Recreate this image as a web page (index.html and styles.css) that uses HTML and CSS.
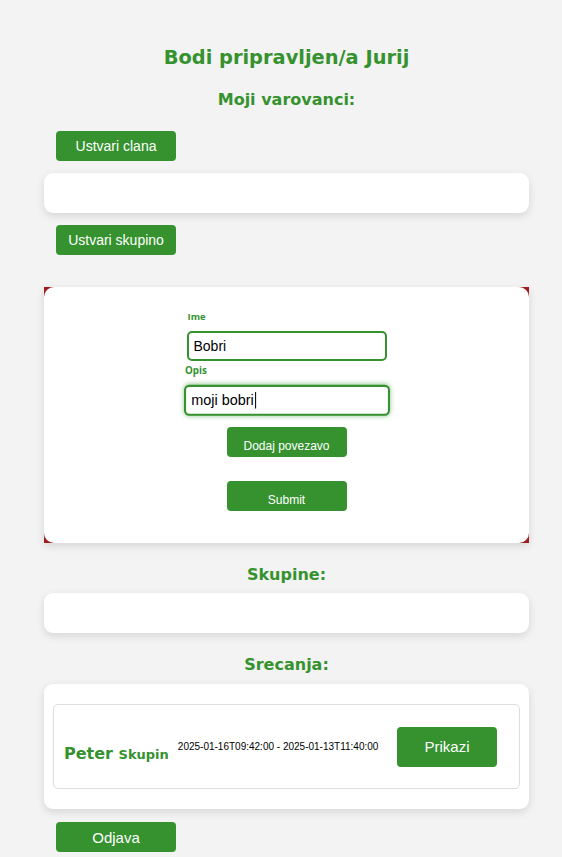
FILE: index.html
```html
<!DOCTYPE html>
<html lang="sl">
<head>
<meta charset="utf-8">
<title>Bodi pripravljen</title>
<link rel="stylesheet" href="styles.css">
</head>
<body>
<main class="page">
  <h1 class="title">Bodi pripravljen/a Jurij</h1>
  <h2 class="section-title sec-first">Moji varovanci:</h2>
  <div class="btn-row row-1"><button class="btn">Ustvari clana</button></div>
  <div class="card card-empty card-members"></div>
  <div class="btn-row row-2"><button class="btn">Ustvari skupino</button></div>

  <div class="form-card">
    <form class="form-inner">
      <div class="field">
        <label class="label">Ime</label>
        <input class="input" type="text" value="Bobri">
      </div>
      <div class="field field-focus">
        <label class="label">Opis</label>
        <div class="input input-focus">moji bobri<span class="caret"></span></div>
      </div>
      <button type="button" class="btn btn-small btn-link">Dodaj povezavo</button>
      <button type="button" class="btn btn-small btn-submit">Submit</button>
    </form>
  </div>

  <h2 class="section-title sec-groups">Skupine:</h2>
  <div class="card card-empty card-groups"></div>

  <h2 class="section-title sec-meet">Srecanja:</h2>
  <div class="card card-meet">
    <div class="meeting">
      <div class="meet-name"><span class="who">Peter</span> <span class="grp">Skupin</span></div>
      <div class="meet-date">2025-01-16T09:42:00 - 2025-01-13T11:40:00</div>
      <button class="btn btn-show">Prikazi</button>
    </div>
  </div>
  <div class="btn-row row-3"><button class="btn btn-logout">Odjava</button></div>
</main>
</body>
</html>
```
FILE: styles.css
```css
* { box-sizing: border-box; }
html, body { margin: 0; padding: 0; }
body {
  background: #f3f3f3;
  font-family: "Liberation Sans", Arial, sans-serif;
}
.page {
  width: 485px;
  margin-left: 44px;
  padding-top: 46px;
  padding-bottom: 20px;
  display: flex;
  flex-direction: column;
}
.title {
  margin: 0;
  font-family: "DejaVu Sans", Verdana, sans-serif;
  font-weight: bold;
  font-size: 19.4px;
  line-height: 24px;
  color: #35922f;
  text-align: center;
}
.section-title {
  margin: 0;
  font-family: "DejaVu Sans", Verdana, sans-serif;
  font-weight: bold;
  font-size: 16px;
  line-height: 20px;
  color: #35922f;
  text-align: center;
}
.sec-first { margin-top: 20px; }
.sec-groups { margin-top: 22px; }
.sec-meet { margin-top: 22px; }

.btn-row { display: flex; padding-left: 12px; }
.row-1 { margin-top: 21px; }
.row-2 { margin-top: 12px; }
.row-3 { margin-top: 13px; }

.btn {
  width: 120px;
  height: 30px;
  border: none;
  border-radius: 4px;
  background: #35922f;
  color: #ffffff;
  font-family: "Liberation Sans", Arial, sans-serif;
  font-size: 14px;
  padding: 0;
  cursor: pointer;
}
.btn-logout { font-size: 15px; }

.card {
  background: #ffffff;
  border-radius: 9px;
  box-shadow: 0 3px 8px rgba(0, 0, 0, 0.12);
}
.card-empty { height: 40px; }
.card-members { margin-top: 12px; }
.card-groups { margin-top: 8px; }

.form-card {
  margin-top: 32px;
  height: 256px;
  background: #a01d1f;
  box-shadow: 0 3px 8px rgba(0, 0, 0, 0.12);
  display: flex;
}
.form-inner {
  flex: 1;
  background: #ffffff;
  border-radius: 10px;
  padding-top: 24px;
  display: flex;
  flex-direction: column;
  align-items: center;
}
.field {
  width: 200px;
  display: flex;
  flex-direction: column;
}
.field-focus {
  margin-top: 4px;
  transform: scale(1.03);
}
.label {
  font-family: "Open Sans", sans-serif;
  font-weight: bold;
  font-size: 9.5px;
  line-height: 12px;
  color: #35922f;
  padding-left: 1px;
  margin-bottom: 8px;
}
.input {
  width: 200px;
  height: 30px;
  border: 2px solid #35922f;
  border-radius: 5px;
  padding: 0 5px;
  font-family: "Liberation Sans", Arial, sans-serif;
  font-size: 14px;
  color: #000000;
  background: #ffffff;
  outline: none;
}
.input-focus {
  display: flex;
  align-items: center;
  box-shadow: 0 0 5px rgba(53, 146, 47, 0.55);
}
.caret {
  display: inline-block;
  width: 1px;
  height: 16px;
  background: #000;
  margin-left: 1px;
}
.btn-small {
  font-size: 12px;
  padding-top: 8px;
}
.btn-link { margin-top: 12px; }
.btn-submit { margin-top: 24px; }

.card-meet {
  margin-top: 9px;
  padding: 20px 9px;
}
.meeting {
  height: 85px;
  border: 1px solid #dddddd;
  border-radius: 5px;
  display: flex;
  align-items: center;
  padding-left: 10px;
  padding-right: 22px;
}
.meet-name {
  margin-top: 13px;
  font-family: "DejaVu Sans", Verdana, sans-serif;
  font-weight: bold;
  color: #35922f;
  white-space: nowrap;
}
.who { font-size: 16px; }
.grp { font-size: 13px; }
.meet-date {
  margin-left: 9px;
  font-size: 10px;
  color: #000;
  white-space: nowrap;
}
.btn-show {
  margin-left: auto;
  width: 100px;
  height: 40px;
  font-size: 15px;
}
```
